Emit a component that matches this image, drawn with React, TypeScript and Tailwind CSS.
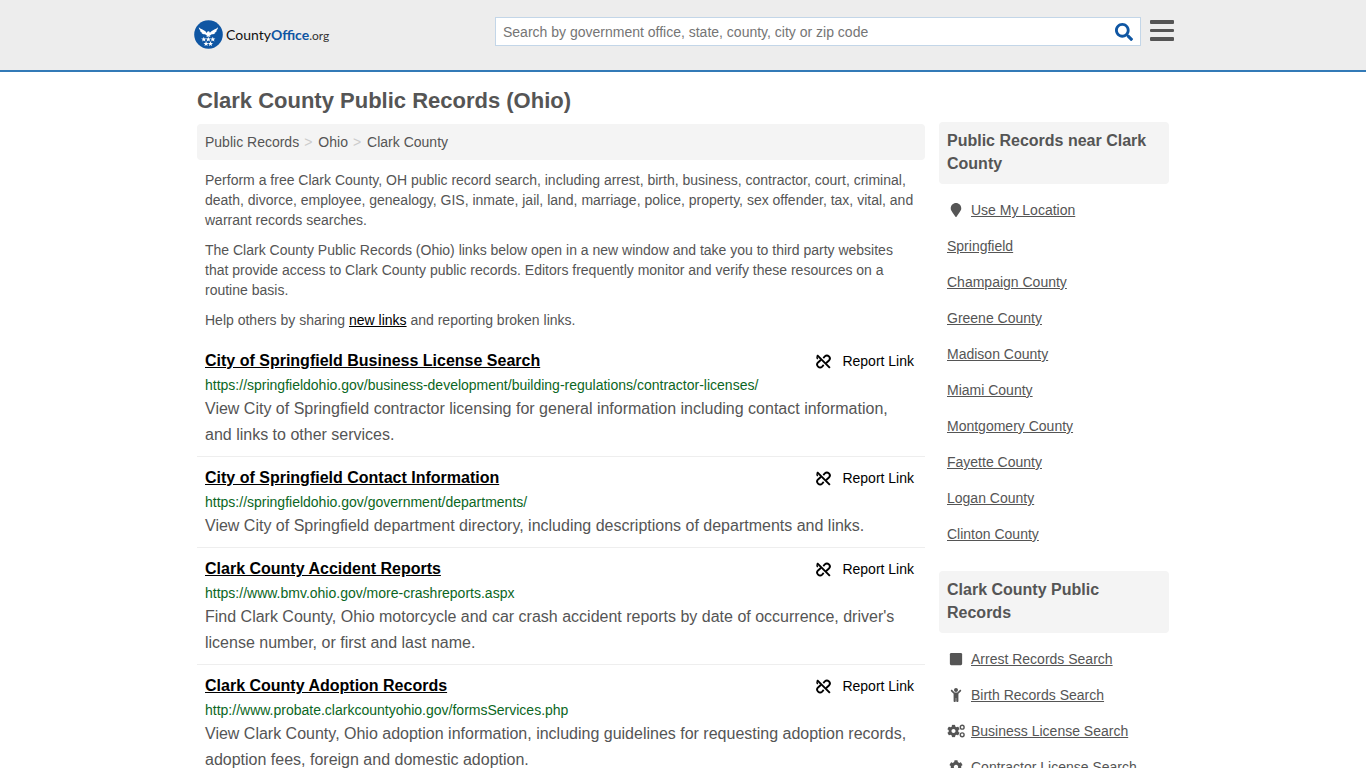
import React from 'react';
import { FaChild, FaCog, FaMapMarker, FaSearch, FaSquare } from 'react-icons/fa';

interface RecordLink {
  title: string;
  url: string;
  description: string;
}

interface SideLink {
  label: string;
  icon?: React.ReactNode;
}

// Chain link with a slash through it
const UnlinkIcon = () => (
  <svg width="15" height="15" viewBox="0 0 16 16" fill="none" stroke="currentColor" strokeWidth="2" aria-hidden="true">
    <path d="M1.200 1.200 14.800 14.800" />
    <path d="M7.800 4.300 9.400 2.600a3.100 3.100 0 0 1 4.400 4.400L10.600 9.900" />
    <path d="M8.200 11.700 6.600 13.400a3.100 3.100 0 0 1-4.400-4.400L5.400 6.100" />
    <path d="M1.800 5.400c-.9-1.200-.8-2.600.2-3.500" strokeWidth="1.500" />
  </svg>
);

// One large gear with two small ones stacked to its right
const CogsIcon = () => (
  <svg width="18" height="14" viewBox="0 0 18 14" aria-hidden="true">
    <FaCog x="0" y="0.500" size={13} />
    <g fill="none" stroke="currentColor" strokeWidth="1.400">
      <circle cx="15.200" cy="3.200" r="1.900" />
      <circle cx="15.200" cy="10.800" r="1.900" />
    </g>
  </svg>
);

const records: RecordLink[] = [
  {
    title: 'City of Springfield Business License Search',
    url: 'https://springfieldohio.gov/business-development/building-regulations/contractor-licenses/',
    description:
      'View City of Springfield contractor licensing for general information including contact information, and links to other services.',
  },
  {
    title: 'City of Springfield Contact Information',
    url: 'https://springfieldohio.gov/government/departments/',
    description: 'View City of Springfield department directory, including descriptions of departments and links.',
  },
  {
    title: 'Clark County Accident Reports',
    url: 'https://www.bmv.ohio.gov/more-crashreports.aspx',
    description:
      "Find Clark County, Ohio motorcycle and car crash accident reports by date of occurrence, driver's license number, or first and last name.",
  },
  {
    title: 'Clark County Adoption Records',
    url: 'http://www.probate.clarkcountyohio.gov/formsServices.php',
    description:
      'View Clark County, Ohio adoption information, including guidelines for requesting adoption records, adoption fees, foreign and domestic adoption.',
  },
];

const nearby: SideLink[] = [
  { label: 'Use My Location', icon: <FaMapMarker size={14} /> },
  { label: 'Springfield' },
  { label: 'Champaign County' },
  { label: 'Greene County' },
  { label: 'Madison County' },
  { label: 'Miami County' },
  { label: 'Montgomery County' },
  { label: 'Fayette County' },
  { label: 'Logan County' },
  { label: 'Clinton County' },
];

const categories: SideLink[] = [
  { label: 'Arrest Records Search', icon: <FaSquare size={14} /> },
  { label: 'Birth Records Search', icon: <FaChild size={14} /> },
  { label: 'Business License Search', icon: <CogsIcon /> },
  { label: 'Contractor License Search', icon: <FaCog size={14} /> },
];

const STAR = 'M0-2.700.700-.900 2.600-.800 1.100.350 1.600 2.200 0 1.200-1.600 2.200-1.100.350-2.600-.800-.700-.900Z';
const stars = [
  [9.8, 19.4],
  [14.3, 19.4],
  [18.8, 19.4],
  [12.1, 23.8],
  [16.5, 23.8],
];

const Logo = () => (
  <a href="#" className="flex items-center gap-[3px]">
    <svg width="29" height="29" viewBox="0 0 29 29" aria-hidden="true">
      <circle cx="14.5" cy="14.5" r="14.3" fill="#0f56a3" />
      <path
        fill="#fff"
        d="M4.800 7.200C6.500 9 9.400 9.500 11.400 11.300L12.700 12.900 13.500 11.600 14.700 11.200 15.800 12 15.600 13 17.400 11.300C19.400 9.500 22.300 9 24 7.200 24 8.700 23.200 9.900 22 10.500L23 10.500C22.500 11.700 21.500 12.400 20.500 12.700L21.300 12.900C20.500 14 19 14.500 17.700 14.300 16.900 15.200 16 15.700 15.500 15.700L16.600 17.100 14.400 16.600 12.200 17.100 13.300 15.700C12.700 15.600 11.900 15.200 11.100 14.300 9.800 14.500 8.300 14 7.500 12.900L8.300 12.700C7.300 12.400 6.300 11.700 5.800 10.500L6.800 10.500C5.600 9.900 4.800 8.700 4.800 7.200Z"
      />
      {stars.map(([x, y]) => (
        <path key={`${x}-${y}`} d={STAR} fill="#fff" transform={`translate(${x} ${y})`} />
      ))}
    </svg>
    <span className="pt-0.5 font-[Lato,'Liberation_Sans',sans-serif] text-[14px] leading-5 text-[#111]">
      County<b className="text-[#0f56a3]">Office</b>
      <span className="text-[12px] text-[#333]">.org</span>
    </span>
  </a>
);

const Header = () => (
  <header className="border-b-2 border-[#337ab7] bg-[#ededed]">
    <div className="mx-auto flex h-[70px] max-w-[982px] items-start pl-0.5">
      <div className="w-[301px] shrink-0 pt-5">
        <Logo />
      </div>
      <form role="search" className="mt-[17px] flex h-[29px] flex-1 items-center border border-[#c3d6e8] bg-white">
        <input
          type="text"
          aria-label="Search"
          placeholder="Search by government office, state, county, city or zip code"
          className="h-full min-w-0 flex-1 bg-transparent px-[7px] text-[14px] outline-none placeholder:text-[#757575]"
        />
        <button type="submit" aria-label="Search" className="px-[7px] text-[#0f56a3]">
          <FaSearch size={18} />
        </button>
      </form>
      <button type="button" aria-label="Menu" className="mt-5 ml-[9px] flex w-6 flex-col gap-[5px]">
        <span className="h-1 w-full rounded-[1px] bg-[#555]" />
        <span className="h-[3px] w-full rounded-[1px] bg-[#555]" />
        <span className="h-1 w-full rounded-[1px] bg-[#555]" />
      </button>
    </div>
  </header>
);

const Breadcrumb = () => (
  <nav aria-label="Breadcrumb" className="rounded bg-[#f4f4f4] p-2">
    <ol className="flex leading-5">
      <li><a href="#">Public Records</a></li>
      <li className="pr-[6px] pl-[5px] text-[#ccc]" aria-hidden="true">&gt;</li>
      <li><a href="#">Ohio</a></li>
      <li className="pr-[6px] pl-[5px] text-[#ccc]" aria-hidden="true">&gt;</li>
      <li>Clark County</li>
    </ol>
  </nav>
);

const RecordItem = ({ record }: { record: RecordLink }) => (
  <li className="border-b border-[#eee] px-2 pt-[9px] pb-2">
    <div className="flex items-center justify-between">
      <h2 className="text-[16px] leading-6 font-bold">
        <a href="#" className="text-black underline">{record.title}</a>
      </h2>
      <button type="button" className="mr-[3px] flex items-center gap-[11px] leading-6 text-black">
        <UnlinkIcon />
        Report Link
      </button>
    </div>
    <p className="pt-0.5 pb-px leading-5 text-[#0b6623]">{record.url}</p>
    <p className="text-[16px] leading-[26px]">{record.description}</p>
  </li>
);

const SideSection = ({ title, links }: { title: string; links: SideLink[] }) => (
  <section>
    <h2 className="rounded bg-[#f4f4f4] px-2 pt-[7px] pb-[9px] text-[16px] leading-[23px] font-bold">{title}</h2>
    <ul className="pt-2">
      {links.map((link) => (
        <li key={link.label} className="p-2 leading-5">
          <a href="#" className="flex items-center gap-[6px]">
            {link.icon && <span className="flex w-[18px] justify-center">{link.icon}</span>}
            <span className="underline">{link.label}</span>
          </a>
        </li>
      ))}
    </ul>
  </section>
);

export default function App() {
  return (
    <div className="h-screen overflow-hidden bg-white font-['Liberation_Sans',Arial,sans-serif] text-[14px] text-[#555]">
      <Header />
      <div className="mx-auto flex max-w-[972px] gap-[14px]">
        <main className="min-w-0 flex-1">
          <h1 className="pt-[17px] pb-[11px] text-[22px] leading-6 font-bold">Clark County Public Records (Ohio)</h1>
          <Breadcrumb />
          <div className="flex flex-col gap-2.5 px-2 py-2.5 leading-5">
            <p>
              Perform a free Clark County, OH public record search, including arrest, birth, business, contractor,
              court, criminal, death, divorce, employee, genealogy, GIS, inmate, jail, land, marriage, police, property,
              sex offender, tax, vital, and warrant records searches.
            </p>
            <p>
              The Clark County Public Records (Ohio) links below open in a new window and take you to third party
              websites that provide access to Clark County public records. Editors frequently monitor and verify these
              resources on a routine basis.
            </p>
            <p>
              Help others by sharing <a href="#" className="text-black underline">new links</a> and reporting broken
              links.
            </p>
          </div>
          <ul>
            {records.map((record) => (
              <RecordItem key={record.title} record={record} />
            ))}
          </ul>
        </main>
        <aside className="flex w-[230px] shrink-0 flex-col gap-[19px] pt-[50px]">
          <SideSection title="Public Records near Clark County" links={nearby} />
          <SideSection title="Clark County Public Records" links={categories} />
        </aside>
      </div>
    </div>
  );
}
